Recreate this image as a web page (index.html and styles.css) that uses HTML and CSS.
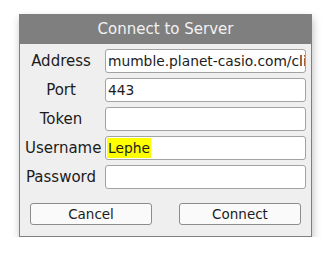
FILE: index.html
```html
<!DOCTYPE html>
<html lang="en">
<head>
  <meta charset="UTF-8" />
  <meta name="viewport" content="width=device-width, initial-scale=1.0" />
  <title>Connect to Server</title>
  <link rel="stylesheet" href="styles.css">
</head>
<body>
  <div class="dialog">
    <div class="title">Connect to Server</div>

    <div class="form">
      <label>Address</label>
      <div class="field">mumble.planet-casio.com/client</div>
      <label>Port</label>
      <div class="field">443</div>
      <label>Token</label>
      <div class="field"></div>
      <label>Username</label>
      <div class="field"><span class="selected">Lephe</span></div>
      <label>Password</label>
      <div class="field"></div>
    </div>

    <div class="buttons">
      <button>Cancel</button>
      <button>Connect</button>
    </div>
  </div>
</body>
</html>
```

FILE: styles.css
```css
:root {
  --frame: #7f7f7f;
  --panel: #efefef;
  --text: #1c1c1c;
}
html, body {
  margin: 0; padding: 0;
  background: #ffffff;
  font-family: 'DejaVu Sans', sans-serif;
  font-size: 15px;
  color: var(--text);
}

.dialog {
  width: 291px;
  margin: 14px 0 0 19px;
  border: 1px solid var(--frame);
  border-top: none;
  background: var(--panel);
  box-shadow: 1px 4px 8px rgba(0,0,0,0.25);
}
.title {
  height: 30px;
  line-height: 30px;
  margin: 0 -1px;
  background: var(--frame);
  color: #f2f2f2;
  text-align: center;
}

/* Fields */
.form {
  display: grid;
  grid-template-columns: 72px 1fr;
  column-gap: 8px;
  row-gap: 5px;
  padding: 5px 5px 0 5px;
}
.form label {
  line-height: 24px;
  text-align: center;
}
.field {
  height: 22px;
  line-height: 22px;
  padding-left: 2px;
  border: 1px solid #a3a3a3;
  border-radius: 3px;
  background: #ffffff;
  font-size: 13.8px;
  white-space: nowrap;
  overflow: hidden;
}
.selected {
  display: inline-block;
  line-height: 20px;
  vertical-align: top;
  margin-top: 1px;
  margin-left: -1px;
  padding: 0 1px;
  background: #ffff00;
}

/* Buttons */
.buttons {
  display: grid;
  grid-template-columns: 1fr 1fr;
  column-gap: 27px;
  padding: 14px 10px 11px;
}
.buttons button {
  height: 22px;
  padding: 0;
  border: 1px solid #8c8c8c;
  border-radius: 3px;
  background: #fafafa;
  font: inherit;
  font-size: 13.5px;
  color: var(--text);
}
```
